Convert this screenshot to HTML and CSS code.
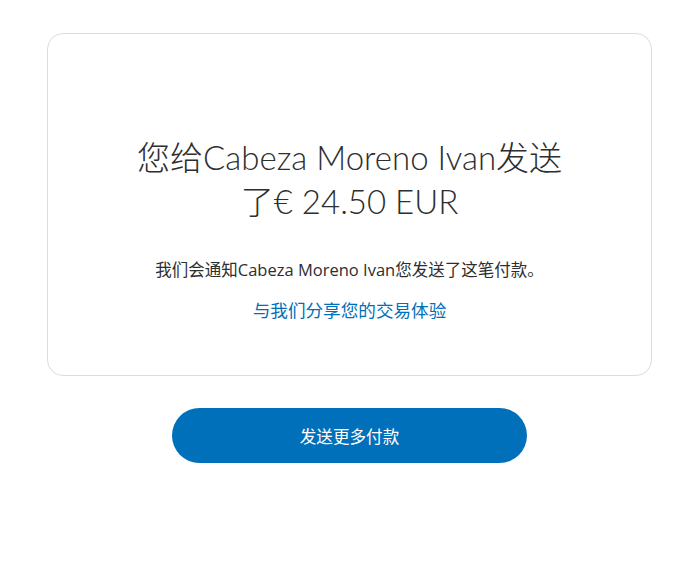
FILE: index.html
```html
<!DOCTYPE html>
<html lang="zh">
<head>
<meta charset="utf-8">
<link rel="stylesheet" href="styles.css">
</head>
<body>
<main class="page">
  <section class="card">
    <h1 class="title">您给Cabeza Moreno Ivan发送了€ 24.50 EUR</h1>
    <p class="note">我们会通知Cabeza Moreno Ivan您发送了这笔付款。</p>
    <a class="link" href="#">与我们分享您的交易体验</a>
  </section>
  <div class="actions">
    <button class="btn">发送更多付款</button>
  </div>
</main>
</body>
</html>
```
FILE: styles.css
```css
html, body {
  margin: 0;
  padding: 0;
  background: #fff;
}
body {
  font-family: "Lato", "Noto Sans CJK SC", sans-serif;
  color: #2c2e2f;
}
.page {
  width: 605px;
  margin-left: 47px;
  padding-top: 33px;
}
.card {
  box-sizing: border-box;
  width: 605px;
  height: 343px;
  border: 1px solid #dcdcdc;
  border-radius: 16px;
  padding: 101px 20px 0;
  display: flex;
  flex-direction: column;
  align-items: center;
  text-align: center;
}
.title {
  margin: 0;
  max-width: 450px;
  font-size: 33px;
  font-weight: 300;
  line-height: 44px;
  color: #2c2e2f;
}
.note {
  margin: 36px 0 0;
  font-family: "Open Sans", "Noto Sans CJK SC", sans-serif;
  font-size: 16.5px;
  line-height: 22px;
  color: #2c2e2f;
}
.link {
  margin-top: 19px;
  font-size: 17.6px;
  line-height: 22px;
  color: #0070ba;
  text-decoration: none;
}
.actions {
  display: flex;
  justify-content: center;
  margin-top: 32px;
}
.btn {
  width: 355px;
  height: 55px;
  border: none;
  border-radius: 28px;
  background: #0070ba;
  color: #fff;
  font-family: "Lato", "Noto Sans CJK SC", sans-serif;
  font-size: 16.6px;
}
```
